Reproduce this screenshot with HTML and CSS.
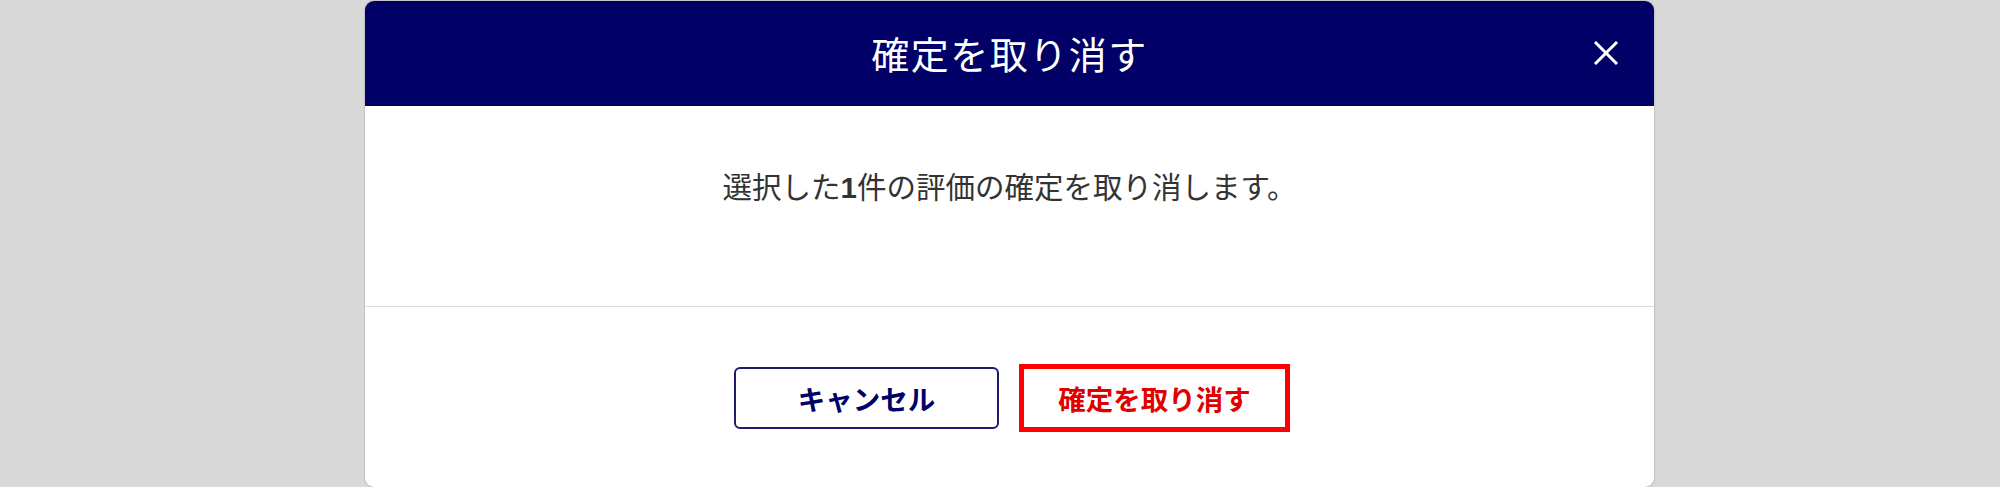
FILE: index.html
```html
<!DOCTYPE html>
<html lang="ja">
<head>
  <meta charset="UTF-8">
  <title>確定を取り消す</title>
  <link rel="stylesheet" href="styles.css">
</head>
<body>

  <div class="modal">
    <div class="modal-header">
      <h2 class="modal-title">確定を取り消す</h2>
      <button class="close-btn" aria-label="閉じる">
        <svg width="26" height="24" viewBox="0 0 26 24">
          <path d="M2 1 L24 23 M24 1 L2 23" stroke="#fff" stroke-width="3" fill="none"/>
        </svg>
      </button>
    </div>

    <div class="modal-body">
      <p class="message">選択した<b>1</b>件の評価の確定を取り消します。</p>
    </div>

    <div class="modal-footer">
      <button class="btn btn-cancel">キャンセル</button>
      <button class="btn btn-undo">確定を取り消す</button>
    </div>
  </div>

</body>
</html>
```

FILE: styles.css
```css
body {
  margin: 0;
  padding-top: 1px;
  background: #d9d9d9;
  font-family: "Liberation Sans", "Noto Sans CJK JP", sans-serif;
  color: #333;
  height: 487px;
  overflow: hidden;
  box-sizing: border-box;
}
.modal {
  margin-left: 365px;
  width: 1289px;
  height: 486px;
  background: #fff;
  border-radius: 9px;
  overflow: hidden;
  box-shadow: 0 0 2px rgba(0, 0, 0, 0.35);
}
.modal-header {
  position: relative;
  height: 105px;
  background: #000066;
  display: flex;
  align-items: center;
  justify-content: center;
}
.modal-title {
  margin: 0;
  font-family: "Noto Sans CJK JP", sans-serif;
  font-weight: normal;
  font-size: 38px;
  letter-spacing: 1.5px;
  color: #fff;
  padding-bottom: 2px;
}
.close-btn {
  position: absolute;
  right: 35px;
  top: 40px;
  padding: 0;
  border: none;
  background: none;
  cursor: pointer;
  line-height: 0;
}
.modal-body {
  padding: 61px 0 97px;
  border-bottom: 1px solid #dcdcdc;
}
.message {
  margin: 0;
  text-align: center;
  font-size: 29.5px;
  line-height: 42px;
  color: #333;
}
.message b {
  font-family: "Liberation Sans", sans-serif;
}
.modal-footer {
  padding-top: 60px;
  display: flex;
  justify-content: center;
  gap: 23px;
  padding-left: 2px;
}
.btn {
  width: 265px;
  height: 62px;
  background: #fff;
  font-family: "Noto Sans CJK JP", sans-serif;
  font-size: 27.5px;
  font-weight: bold;
  border-radius: 6px;
  cursor: pointer;
}
.btn-cancel {
  border: 2px solid #1c1c70;
  color: #000066;
}
.btn-undo {
  border: 1px solid #c8c8c8;
  border-radius: 0;
  color: #e00000;
  outline: 5px solid #ff0000;
  outline-offset: -2px;
}
```
